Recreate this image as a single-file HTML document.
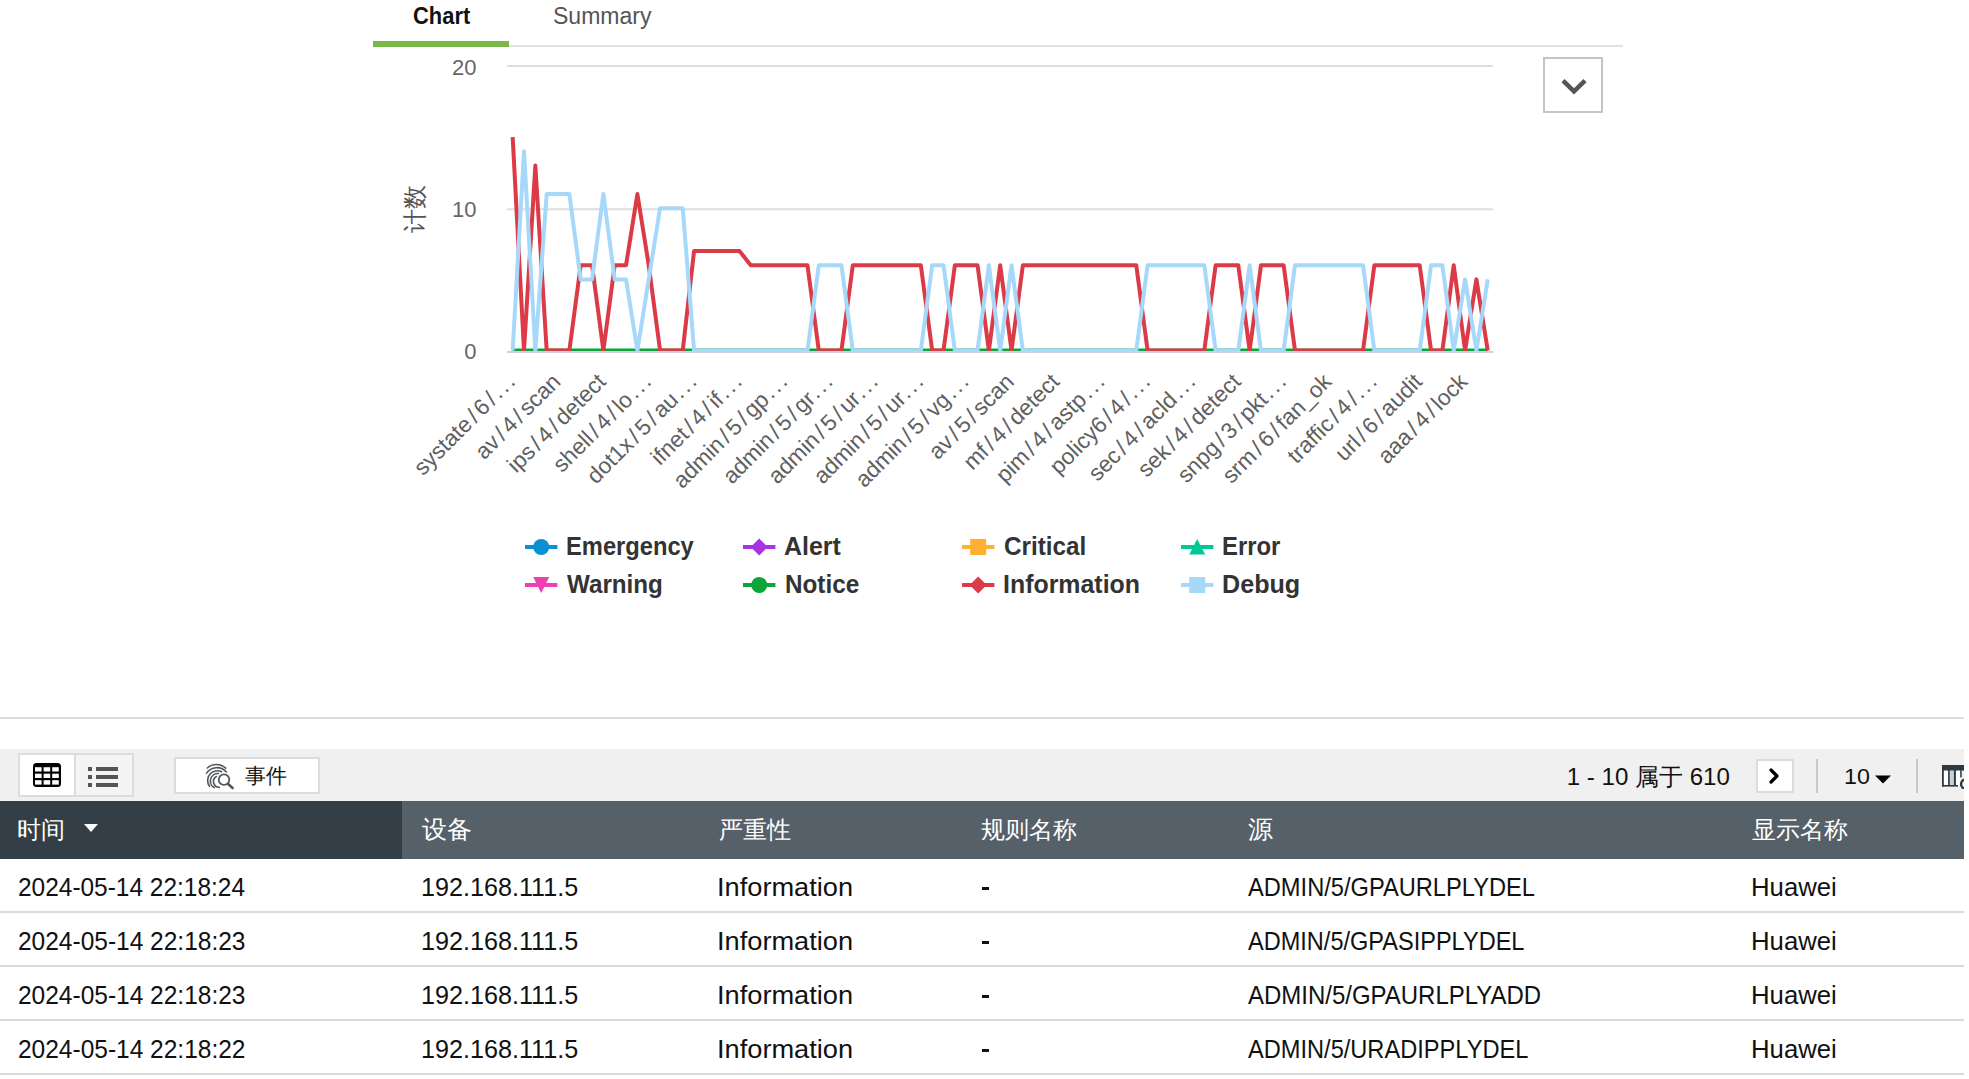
<!DOCTYPE html>
<html><head><meta charset="utf-8">
<style>
html,body{margin:0;padding:0;background:#fff;width:1969px;height:1079px;overflow:hidden;position:relative;font-family:"Liberation Sans",sans-serif;}
.abs{position:absolute;}
.t{position:absolute;white-space:nowrap;transform-origin:0 0;font-family:"Liberation Sans",sans-serif;}
</style></head><body>
<svg class="abs" style="left:0;top:0" width="1969" height="720" viewBox="0 0 1969 720">
<g stroke="#dedede" stroke-width="2">
<line x1="507" y1="66" x2="1493" y2="66"/>
<line x1="507" y1="209.3" x2="1493" y2="209.3"/>
</g>
<defs><clipPath id="pc"><rect x="500" y="40" width="1000" height="311"/></clipPath></defs>
<line x1="507" y1="352" x2="1493.4" y2="352" stroke="#c9d0e8" stroke-width="2"/>
<g font-family="Liberation Sans, sans-serif" font-size="22" fill="#666" text-anchor="end">
<text x="476.5" y="75">20</text>
<text x="476.5" y="217">10</text>
<text x="476.5" y="359">0</text>
</g>
<text x="0" y="0" transform="translate(422.8 209) rotate(-90)" font-family="Liberation Sans, sans-serif" font-size="23.5" fill="#555" text-anchor="middle">计数</text>
<g clip-path="url(#pc)">
<line x1="512.67" y1="350.5" x2="1487.74" y2="350.5" stroke="#0aa63c" stroke-width="4"/>
<polyline points="512.67,137.12 524.01,350.50 535.35,165.58 546.68,350.50 558.02,350.50 569.36,350.50 580.70,265.15 592.04,265.15 603.37,350.50 614.71,265.15 626.05,265.15 637.39,194.03 648.73,265.15 660.06,350.50 671.40,350.50 682.74,350.50 694.08,250.93 705.42,250.93 716.75,250.93 728.09,250.93 739.43,250.93 750.77,265.15 762.11,265.15 773.44,265.15 784.78,265.15 796.12,265.15 807.46,265.15 818.80,350.50 830.13,350.50 841.47,350.50 852.81,265.15 864.15,265.15 875.49,265.15 886.82,265.15 898.16,265.15 909.50,265.15 920.84,265.15 932.18,350.50 943.51,350.50 954.85,265.15 966.19,265.15 977.53,265.15 988.87,350.50 1000.20,265.15 1011.54,350.50 1022.88,265.15 1034.22,265.15 1045.56,265.15 1056.89,265.15 1068.23,265.15 1079.57,265.15 1090.91,265.15 1102.25,265.15 1113.58,265.15 1124.92,265.15 1136.26,265.15 1147.60,350.50 1158.94,350.50 1170.27,350.50 1181.61,350.50 1192.95,350.50 1204.29,350.50 1215.63,265.15 1226.96,265.15 1238.30,265.15 1249.64,350.50 1260.98,265.15 1272.32,265.15 1283.65,265.15 1294.99,350.50 1306.33,350.50 1317.67,350.50 1329.01,350.50 1340.34,350.50 1351.68,350.50 1363.02,350.50 1374.36,265.15 1385.70,265.15 1397.03,265.15 1408.37,265.15 1419.71,265.15 1431.05,350.50 1442.39,350.50 1453.72,265.15 1465.06,350.50 1476.40,279.38 1487.74,350.50" fill="none" stroke="#db3a46" stroke-width="4" stroke-linejoin="round"/>
<polyline points="512.67,350.50 524.01,151.35 535.35,350.50 546.68,194.03 558.02,194.03 569.36,194.03 580.70,279.38 592.04,279.38 603.37,194.03 614.71,279.38 626.05,279.38 637.39,350.50 648.73,279.38 660.06,208.25 671.40,208.25 682.74,208.25 694.08,350.50 705.42,350.50 716.75,350.50 728.09,350.50 739.43,350.50 750.77,350.50 762.11,350.50 773.44,350.50 784.78,350.50 796.12,350.50 807.46,350.50 818.80,265.15 830.13,265.15 841.47,265.15 852.81,350.50 864.15,350.50 875.49,350.50 886.82,350.50 898.16,350.50 909.50,350.50 920.84,350.50 932.18,265.15 943.51,265.15 954.85,350.50 966.19,350.50 977.53,350.50 988.87,265.15 1000.20,350.50 1011.54,265.15 1022.88,350.50 1034.22,350.50 1045.56,350.50 1056.89,350.50 1068.23,350.50 1079.57,350.50 1090.91,350.50 1102.25,350.50 1113.58,350.50 1124.92,350.50 1136.26,350.50 1147.60,265.15 1158.94,265.15 1170.27,265.15 1181.61,265.15 1192.95,265.15 1204.29,265.15 1215.63,350.50 1226.96,350.50 1238.30,350.50 1249.64,265.15 1260.98,350.50 1272.32,350.50 1283.65,350.50 1294.99,265.15 1306.33,265.15 1317.67,265.15 1329.01,265.15 1340.34,265.15 1351.68,265.15 1363.02,265.15 1374.36,350.50 1385.70,350.50 1397.03,350.50 1408.37,350.50 1419.71,350.50 1431.05,265.15 1442.39,265.15 1453.72,350.50 1465.06,279.38 1476.40,350.50 1487.74,279.38" fill="none" stroke="#a6d8fa" stroke-width="4" stroke-linejoin="round"/>
</g>
<g font-family="Liberation Sans, sans-serif" font-size="22.6" fill="#606060">
<text x="516.47" y="383" transform="rotate(-45 516.47 383)" text-anchor="end"><tspan>systate</tspan><tspan dx="3.2">/</tspan><tspan dx="3.2">6</tspan><tspan dx="3.2">/</tspan><tspan dx="3.2"></tspan><tspan dx="2">.</tspan><tspan dx="2.5">.</tspan><tspan dx="2.5">.</tspan></text>
<text x="561.82" y="383" transform="rotate(-45 561.82 383)" text-anchor="end"><tspan>av</tspan><tspan dx="3.2">/</tspan><tspan dx="3.2">4</tspan><tspan dx="3.2">/</tspan><tspan dx="3.2">scan</tspan></text>
<text x="607.17" y="383" transform="rotate(-45 607.17 383)" text-anchor="end"><tspan>ips</tspan><tspan dx="3.2">/</tspan><tspan dx="3.2">4</tspan><tspan dx="3.2">/</tspan><tspan dx="3.2">detect</tspan></text>
<text x="652.53" y="383" transform="rotate(-45 652.53 383)" text-anchor="end"><tspan>shell</tspan><tspan dx="3.2">/</tspan><tspan dx="3.2">4</tspan><tspan dx="3.2">/</tspan><tspan dx="3.2">lo</tspan><tspan dx="2">.</tspan><tspan dx="2.5">.</tspan><tspan dx="2.5">.</tspan></text>
<text x="697.88" y="383" transform="rotate(-45 697.88 383)" text-anchor="end"><tspan>dot1x</tspan><tspan dx="3.2">/</tspan><tspan dx="3.2">5</tspan><tspan dx="3.2">/</tspan><tspan dx="3.2">au</tspan><tspan dx="2">.</tspan><tspan dx="2.5">.</tspan><tspan dx="2.5">.</tspan></text>
<text x="743.23" y="383" transform="rotate(-45 743.23 383)" text-anchor="end"><tspan>ifnet</tspan><tspan dx="3.2">/</tspan><tspan dx="3.2">4</tspan><tspan dx="3.2">/</tspan><tspan dx="3.2">if</tspan><tspan dx="2">.</tspan><tspan dx="2.5">.</tspan><tspan dx="2.5">.</tspan></text>
<text x="788.58" y="383" transform="rotate(-45 788.58 383)" text-anchor="end"><tspan>admin</tspan><tspan dx="3.2">/</tspan><tspan dx="3.2">5</tspan><tspan dx="3.2">/</tspan><tspan dx="3.2">gp</tspan><tspan dx="2">.</tspan><tspan dx="2.5">.</tspan><tspan dx="2.5">.</tspan></text>
<text x="833.93" y="383" transform="rotate(-45 833.93 383)" text-anchor="end"><tspan>admin</tspan><tspan dx="3.2">/</tspan><tspan dx="3.2">5</tspan><tspan dx="3.2">/</tspan><tspan dx="3.2">gr</tspan><tspan dx="2">.</tspan><tspan dx="2.5">.</tspan><tspan dx="2.5">.</tspan></text>
<text x="879.29" y="383" transform="rotate(-45 879.29 383)" text-anchor="end"><tspan>admin</tspan><tspan dx="3.2">/</tspan><tspan dx="3.2">5</tspan><tspan dx="3.2">/</tspan><tspan dx="3.2">ur</tspan><tspan dx="2">.</tspan><tspan dx="2.5">.</tspan><tspan dx="2.5">.</tspan></text>
<text x="924.64" y="383" transform="rotate(-45 924.64 383)" text-anchor="end"><tspan>admin</tspan><tspan dx="3.2">/</tspan><tspan dx="3.2">5</tspan><tspan dx="3.2">/</tspan><tspan dx="3.2">ur</tspan><tspan dx="2">.</tspan><tspan dx="2.5">.</tspan><tspan dx="2.5">.</tspan></text>
<text x="969.99" y="383" transform="rotate(-45 969.99 383)" text-anchor="end"><tspan>admin</tspan><tspan dx="3.2">/</tspan><tspan dx="3.2">5</tspan><tspan dx="3.2">/</tspan><tspan dx="3.2">vg</tspan><tspan dx="2">.</tspan><tspan dx="2.5">.</tspan><tspan dx="2.5">.</tspan></text>
<text x="1015.34" y="383" transform="rotate(-45 1015.34 383)" text-anchor="end"><tspan>av</tspan><tspan dx="3.2">/</tspan><tspan dx="3.2">5</tspan><tspan dx="3.2">/</tspan><tspan dx="3.2">scan</tspan></text>
<text x="1060.69" y="383" transform="rotate(-45 1060.69 383)" text-anchor="end"><tspan>mf</tspan><tspan dx="3.2">/</tspan><tspan dx="3.2">4</tspan><tspan dx="3.2">/</tspan><tspan dx="3.2">detect</tspan></text>
<text x="1106.05" y="383" transform="rotate(-45 1106.05 383)" text-anchor="end"><tspan>pim</tspan><tspan dx="3.2">/</tspan><tspan dx="3.2">4</tspan><tspan dx="3.2">/</tspan><tspan dx="3.2">astp</tspan><tspan dx="2">.</tspan><tspan dx="2.5">.</tspan><tspan dx="2.5">.</tspan></text>
<text x="1151.40" y="383" transform="rotate(-45 1151.40 383)" text-anchor="end"><tspan>policy6</tspan><tspan dx="3.2">/</tspan><tspan dx="3.2">4</tspan><tspan dx="3.2">/</tspan><tspan dx="3.2"></tspan><tspan dx="2">.</tspan><tspan dx="2.5">.</tspan><tspan dx="2.5">.</tspan></text>
<text x="1196.75" y="383" transform="rotate(-45 1196.75 383)" text-anchor="end"><tspan>sec</tspan><tspan dx="3.2">/</tspan><tspan dx="3.2">4</tspan><tspan dx="3.2">/</tspan><tspan dx="3.2">acld</tspan><tspan dx="2">.</tspan><tspan dx="2.5">.</tspan><tspan dx="2.5">.</tspan></text>
<text x="1242.10" y="383" transform="rotate(-45 1242.10 383)" text-anchor="end"><tspan>sek</tspan><tspan dx="3.2">/</tspan><tspan dx="3.2">4</tspan><tspan dx="3.2">/</tspan><tspan dx="3.2">detect</tspan></text>
<text x="1287.45" y="383" transform="rotate(-45 1287.45 383)" text-anchor="end"><tspan>snpg</tspan><tspan dx="3.2">/</tspan><tspan dx="3.2">3</tspan><tspan dx="3.2">/</tspan><tspan dx="3.2">pkt</tspan><tspan dx="2">.</tspan><tspan dx="2.5">.</tspan><tspan dx="2.5">.</tspan></text>
<text x="1332.81" y="383" transform="rotate(-45 1332.81 383)" text-anchor="end"><tspan>srm</tspan><tspan dx="3.2">/</tspan><tspan dx="3.2">6</tspan><tspan dx="3.2">/</tspan><tspan dx="3.2">fan_ok</tspan></text>
<text x="1378.16" y="383" transform="rotate(-45 1378.16 383)" text-anchor="end"><tspan>traffic</tspan><tspan dx="3.2">/</tspan><tspan dx="3.2">4</tspan><tspan dx="3.2">/</tspan><tspan dx="3.2"></tspan><tspan dx="2">.</tspan><tspan dx="2.5">.</tspan><tspan dx="2.5">.</tspan></text>
<text x="1423.51" y="383" transform="rotate(-45 1423.51 383)" text-anchor="end"><tspan>url</tspan><tspan dx="3.2">/</tspan><tspan dx="3.2">6</tspan><tspan dx="3.2">/</tspan><tspan dx="3.2">audit</tspan></text>
<text x="1468.86" y="383" transform="rotate(-45 1468.86 383)" text-anchor="end"><tspan>aaa</tspan><tspan dx="3.2">/</tspan><tspan dx="3.2">4</tspan><tspan dx="3.2">/</tspan><tspan dx="3.2">lock</tspan></text>
</g>
</svg>
<span class="t" style="left:412.72px;top:4.01px;font-size:23.94px;line-height:23.94px;font-weight:700;color:#111;transform:scaleX(0.9152);">Chart</span>
<span class="t" style="left:553.05px;top:4.01px;font-size:23.94px;line-height:23.94px;font-weight:400;color:#555;transform:scaleX(0.9610);">Summary</span>
<div class="abs" style="left:373px;top:45px;width:1250px;height:2px;background:#dde3e6;"></div>
<div class="abs" style="left:373px;top:41px;width:136px;height:6px;background:#7ab648;"></div>
<div class="abs" style="left:1543px;top:57px;width:56px;height:51.5px;border:2px solid #c4c4c4;"></div>
<svg class="abs" style="left:1543px;top:57px" width="60" height="56"><polyline points="20,23.6 31,34.4 42,23.6" fill="none" stroke="#555" stroke-width="4.5"/></svg>
<svg class="abs" style="left:525.0px;top:534.5px" width="33" height="24"><rect x="0" y="10" width="32.4" height="4" fill="#0a8fd0"/><circle cx="16.2" cy="12" r="8" fill="#0a8fd0"/></svg>
<span class="t" style="left:566.24px;top:534.01px;font-size:25.92px;line-height:25.92px;font-weight:700;color:#333;transform:scaleX(0.9149);">Emergency</span>
<svg class="abs" style="left:743.3px;top:534.5px" width="33" height="24"><rect x="0" y="10" width="32.4" height="4" fill="#a633e6"/><polygon points="16.2,3.5 24.7,12 16.2,20.5 7.7,12" fill="#a633e6"/></svg>
<span class="t" style="left:784.35px;top:534.01px;font-size:25.92px;line-height:25.92px;font-weight:700;color:#333;transform:scaleX(0.9630);">Alert</span>
<svg class="abs" style="left:962.2px;top:534.5px" width="33" height="24"><rect x="0" y="10" width="32.4" height="4" fill="#ffb030"/><rect x="8.2" y="4" width="16" height="16" fill="#ffb030"/></svg>
<span class="t" style="left:1003.83px;top:534.01px;font-size:25.92px;line-height:25.92px;font-weight:700;color:#333;transform:scaleX(0.9364);">Critical</span>
<svg class="abs" style="left:1180.7px;top:534.5px" width="33" height="24"><rect x="0" y="10" width="32.4" height="4" fill="#00c896"/><polygon points="16.2,4 24.2,19.5 8.2,19.5" fill="#00c896"/></svg>
<span class="t" style="left:1221.63px;top:534.01px;font-size:25.92px;line-height:25.92px;font-weight:700;color:#333;transform:scaleX(0.9205);">Error</span>
<svg class="abs" style="left:525.0px;top:573.0px" width="33" height="24"><rect x="0" y="10" width="32.4" height="4" fill="#ee3fb5"/><polygon points="8.2,4 24.2,4 16.2,20" fill="#ee3fb5"/></svg>
<span class="t" style="left:567.10px;top:572.25px;font-size:25.63px;line-height:25.63px;font-weight:700;color:#333;transform:scaleX(0.9443);">Warning</span>
<svg class="abs" style="left:743.3px;top:573.0px" width="33" height="24"><rect x="0" y="10" width="32.4" height="4" fill="#0aa63c"/><circle cx="16.2" cy="12" r="8" fill="#0aa63c"/></svg>
<span class="t" style="left:785.00px;top:572.25px;font-size:25.63px;line-height:25.63px;font-weight:700;color:#333;transform:scaleX(0.9468);">Notice</span>
<svg class="abs" style="left:962.2px;top:573.0px" width="33" height="24"><rect x="0" y="10" width="32.4" height="4" fill="#db3a46"/><polygon points="16.2,3.5 24.7,12 16.2,20.5 7.7,12" fill="#db3a46"/></svg>
<span class="t" style="left:1003.46px;top:572.25px;font-size:25.63px;line-height:25.63px;font-weight:700;color:#333;transform:scaleX(0.9720);">Information</span>
<svg class="abs" style="left:1180.7px;top:573.0px" width="33" height="24"><rect x="0" y="10" width="32.4" height="4" fill="#a6d8fa"/><rect x="8.2" y="4" width="16" height="16" fill="#a6d8fa"/></svg>
<span class="t" style="left:1221.54px;top:572.25px;font-size:25.63px;line-height:25.63px;font-weight:700;color:#333;transform:scaleX(0.9812);">Debug</span>
<div class="abs" style="left:0;top:717px;width:1964px;height:2px;background:#d9dee1;"></div>
<div class="abs" style="left:0;top:749px;width:1964px;height:52px;background:#f0f0f0;overflow:hidden;">
<div class="abs" style="left:18px;top:4px;width:112px;height:40px;border:2px solid #d9dedf;background:#f4f4f4;"></div>
<div class="abs" style="left:20px;top:6px;width:54px;height:40px;background:#fff;"></div>
<div class="abs" style="left:74px;top:6px;width:2px;height:40px;background:#d9dedf;"></div>
<svg class="abs" style="left:33px;top:14px" width="28" height="24" viewBox="0 0 28 24">
<rect x="0" y="0" width="28" height="24" rx="3.5" fill="#000"/>
<g fill="#fff"><rect x="2" y="4.2" width="6.6" height="4.3"/><rect x="10.6" y="4.2" width="6.6" height="4.3"/><rect x="19.2" y="4.2" width="6.6" height="4.3"/>
<rect x="2" y="10.7" width="6.6" height="4.3"/><rect x="10.6" y="10.7" width="6.6" height="4.3"/><rect x="19.2" y="10.7" width="6.6" height="4.3"/>
<rect x="2" y="17.2" width="6.6" height="4.4"/><rect x="10.6" y="17.2" width="6.6" height="4.4"/><rect x="19.2" y="17.2" width="6.6" height="4.4"/></g>
</svg>
<svg class="abs" style="left:87px;top:17px" width="32" height="22" viewBox="0 0 32 22">
<g fill="#555"><rect x="1" y="1" width="4" height="4"/><rect x="9" y="1" width="22" height="4"/>
<rect x="1" y="9" width="4" height="4"/><rect x="9" y="9" width="22" height="4"/>
<rect x="1" y="17" width="4" height="4"/><rect x="9" y="17" width="22" height="4"/></g>
</svg>
<div class="abs" style="left:174px;top:8px;width:142px;height:33px;border:2px solid #d9dddd;background:#fff;"></div>
<svg class="abs" style="left:200px;top:10.2px" width="40" height="36" viewBox="0 0 40 36">
<g fill="none" stroke="#4f575c" stroke-width="1.6" stroke-linecap="round">
<path d="M7.33 9 A13.52 13.52 0 0 1 25.67 9.17"/>
<path d="M6.5 14.17 A12.5 12.5 0 0 1 26.33 13"/>
<path d="M9.5 27.33 A9.83 9.83 0 0 1 21.67 12.67"/>
<path d="M14.33 28.67 A7.55 7.55 0 0 1 18.5 14.5"/>
<path d="M19.33 28.33 A5.81 5.81 0 0 1 16.33 17.5"/>
<circle cx="24" cy="20.67" r="5.3" stroke-width="1.8"/>
<path d="M28.4 25.3 L32.6 29" stroke-width="2.6"/>
</g>
</svg>
<div class="abs" style="left:1756px;top:10px;width:34px;height:30px;border:2px solid #d9dddd;background:#fff;"></div>
<svg class="abs" style="left:1756px;top:10px" width="38" height="34" viewBox="0 0 38 34"><polyline points="15,11 21,17 15,23" fill="none" stroke="#000" stroke-width="3.2" stroke-linecap="round" stroke-linejoin="round"/></svg>
<div class="abs" style="left:1816px;top:10px;width:2px;height:34px;background:#c8c8c8;"></div>
<svg class="abs" style="left:1874px;top:25.5px" width="18" height="10" viewBox="0 0 18 10"><polygon points="1,0.5 17,0.5 9,8.5" fill="#000"/></svg>
<div class="abs" style="left:1916px;top:10px;width:2px;height:34px;background:#c8c8c8;"></div>
<svg class="abs" style="left:1942px;top:16.1px" width="22" height="24" viewBox="0 0 22 24">
<rect x="0" y="5" width="19" height="16" fill="#fff"/>
<rect x="7.8" y="5.5" width="4.1" height="14.5" fill="#cfcfcf"/>
<g fill="#2b3a44">
<rect x="0" y="0" width="22" height="5.5"/>
<rect x="0" y="0" width="1.8" height="21.6"/>
<rect x="0" y="20" width="16" height="1.6"/>
<rect x="6.1" y="5" width="1.7" height="16"/>
<rect x="11.9" y="5" width="2" height="16"/>
<rect x="18.2" y="5" width="1.5" height="7.5"/>
</g>
<circle cx="23.6" cy="19.2" r="5.6" fill="#f0f0f0" stroke="#fff" stroke-width="1.5"/>
<circle cx="23.6" cy="19.2" r="4.6" fill="none" stroke="#2b3a44" stroke-width="2.4"/>
</svg>
</div>
<span class="t" style="left:244.77px;top:765.96px;font-size:21.47px;line-height:21.47px;color:#111;">事件</span>
<span class="t" style="left:1566.77px;top:765.19px;font-size:24.08px;line-height:24.08px;font-weight:400;color:#111;transform:scaleX(1.0000);">1 - 10 属于 610</span>
<span class="t" style="left:1844.14px;top:765.48px;font-size:22.82px;line-height:22.82px;font-weight:400;color:#111;transform:scaleX(1.0182);">10</span>
<div class="abs" style="left:0;top:801px;width:1964px;height:57.7px;background:#566068;"></div>
<div class="abs" style="left:0;top:801px;width:402px;height:57.7px;background:#343e46;"></div>
<svg class="abs" style="left:83px;top:823px" width="16" height="10" viewBox="0 0 16 10"><polygon points="1,1 15,1 8,9" fill="#fff"/></svg>
<span class="t" style="left:17.32px;top:818.08px;font-size:24.00px;line-height:24.00px;color:#fff;">时间</span>
<span class="t" style="left:421.65px;top:817.82px;font-size:24.52px;line-height:24.52px;color:#fff;">设备</span>
<span class="t" style="left:718.59px;top:818.32px;font-size:23.75px;line-height:23.75px;color:#fff;">严重性</span>
<span class="t" style="left:981.02px;top:817.84px;font-size:24.00px;line-height:24.00px;color:#fff;">规则名称</span>
<span class="t" style="left:1247.50px;top:817.56px;font-size:24.78px;line-height:24.78px;color:#fff;">源</span>
<span class="t" style="left:1751.91px;top:817.83px;font-size:24.26px;line-height:24.26px;color:#fff;">显示名称</span>
<span class="t" style="left:17.58px;top:874.76px;font-size:24.93px;line-height:24.93px;font-weight:400;color:#111;transform:scaleX(0.9808);">2024-05-14 22:18:24</span>
<span class="t" style="left:420.89px;top:874.76px;font-size:24.93px;line-height:24.93px;font-weight:400;color:#111;transform:scaleX(1.0100);">192.168.111.5</span>
<span class="t" style="left:717.15px;top:874.76px;font-size:24.93px;line-height:24.93px;font-weight:400;color:#111;transform:scaleX(1.0917);">Information</span>
<div class="abs" style="left:981.5px;top:887.30px;width:7.3px;height:2.3px;background:#111;"></div>
<span class="t" style="left:1247.70px;top:874.76px;font-size:24.93px;line-height:24.93px;font-weight:400;color:#111;transform:scaleX(0.9491);">ADMIN/5/GPAURLPLYDEL</span>
<span class="t" style="left:1750.64px;top:874.76px;font-size:24.93px;line-height:24.93px;font-weight:400;color:#111;transform:scaleX(1.0324);">Huawei</span>
<div class="abs" style="left:0;top:911.00px;width:1964px;height:2px;background:#dadada;"></div>
<span class="t" style="left:17.57px;top:928.76px;font-size:24.93px;line-height:24.93px;font-weight:400;color:#111;transform:scaleX(0.9830);">2024-05-14 22:18:23</span>
<span class="t" style="left:420.89px;top:928.76px;font-size:24.93px;line-height:24.93px;font-weight:400;color:#111;transform:scaleX(1.0100);">192.168.111.5</span>
<span class="t" style="left:717.15px;top:928.76px;font-size:24.93px;line-height:24.93px;font-weight:400;color:#111;transform:scaleX(1.0917);">Information</span>
<div class="abs" style="left:981.5px;top:941.30px;width:7.3px;height:2.3px;background:#111;"></div>
<span class="t" style="left:1247.70px;top:928.76px;font-size:24.93px;line-height:24.93px;font-weight:400;color:#111;transform:scaleX(0.9444);">ADMIN/5/GPASIPPLYDEL</span>
<span class="t" style="left:1750.64px;top:928.76px;font-size:24.93px;line-height:24.93px;font-weight:400;color:#111;transform:scaleX(1.0324);">Huawei</span>
<div class="abs" style="left:0;top:965.00px;width:1964px;height:2px;background:#dadada;"></div>
<span class="t" style="left:17.57px;top:982.76px;font-size:24.93px;line-height:24.93px;font-weight:400;color:#111;transform:scaleX(0.9830);">2024-05-14 22:18:23</span>
<span class="t" style="left:420.89px;top:982.76px;font-size:24.93px;line-height:24.93px;font-weight:400;color:#111;transform:scaleX(1.0100);">192.168.111.5</span>
<span class="t" style="left:717.15px;top:982.76px;font-size:24.93px;line-height:24.93px;font-weight:400;color:#111;transform:scaleX(1.0917);">Information</span>
<div class="abs" style="left:981.5px;top:995.30px;width:7.3px;height:2.3px;background:#111;"></div>
<span class="t" style="left:1247.70px;top:982.76px;font-size:24.93px;line-height:24.93px;font-weight:400;color:#111;transform:scaleX(0.9620);">ADMIN/5/GPAURLPLYADD</span>
<span class="t" style="left:1750.64px;top:982.76px;font-size:24.93px;line-height:24.93px;font-weight:400;color:#111;transform:scaleX(1.0324);">Huawei</span>
<div class="abs" style="left:0;top:1019.00px;width:1964px;height:2px;background:#dadada;"></div>
<span class="t" style="left:17.57px;top:1036.76px;font-size:24.93px;line-height:24.93px;font-weight:400;color:#111;transform:scaleX(0.9830);">2024-05-14 22:18:22</span>
<span class="t" style="left:420.89px;top:1036.76px;font-size:24.93px;line-height:24.93px;font-weight:400;color:#111;transform:scaleX(1.0100);">192.168.111.5</span>
<span class="t" style="left:717.15px;top:1036.76px;font-size:24.93px;line-height:24.93px;font-weight:400;color:#111;transform:scaleX(1.0917);">Information</span>
<div class="abs" style="left:981.5px;top:1049.30px;width:7.3px;height:2.3px;background:#111;"></div>
<span class="t" style="left:1247.70px;top:1036.76px;font-size:24.93px;line-height:24.93px;font-weight:400;color:#111;transform:scaleX(0.9473);">ADMIN/5/URADIPPLYDEL</span>
<span class="t" style="left:1750.64px;top:1036.76px;font-size:24.93px;line-height:24.93px;font-weight:400;color:#111;transform:scaleX(1.0324);">Huawei</span>
<div class="abs" style="left:0;top:1073.00px;width:1964px;height:2px;background:#dadada;"></div>

</body></html>
